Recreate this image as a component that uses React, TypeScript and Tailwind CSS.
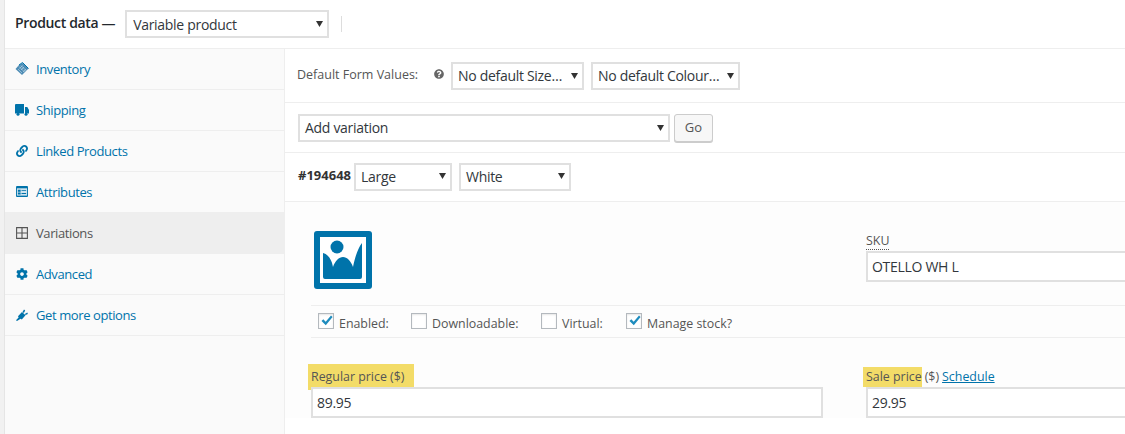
import { FaLink, FaCog, FaQuestionCircle } from 'react-icons/fa';
import type { ReactNode } from 'react';

function Select({ label, className }: { label: string; className: string }) {
    return (
        <div className={`flex h-[28px] items-center justify-between border-2 border-[#e0e0e0] bg-white pl-[5px] pr-[4px] text-[14px] tracking-[-0.3px] text-[#32373c] ${className}`}>
            <span className="whitespace-nowrap">{label}</span>
            <svg width="7" height="6" viewBox="0 0 7 6" className="shrink-0">
                <path d="M0 0h7L3.5 6z" fill="#333" />
            </svg>
        </div>
    );
}

function Check({ checked }: { checked?: boolean }) {
    return (
        <span className="relative block size-[16px] shrink-0 border border-[#b4b9be] bg-white shadow-[inset_0_1px_2px_rgba(0,0,0,0.1)]">
            {checked && (
                <svg width="16" height="14" viewBox="0 0 16 14" className="absolute left-0 top-0">
                    <path d="M2.5 7l1.8-1.8 2.4 2.6L12 1.5l1.6 1.4-6.8 8.4z" fill="#1e8cbe" />
                </svg>
            )}
        </span>
    );
}

function CheckField({ label, checked, className }: { label: string; checked?: boolean; className: string }) {
    return (
        <div className={`flex items-center gap-[5px] ${className}`}>
            <Check checked={checked} />
            <span className="mt-[6px] whitespace-nowrap text-[12.4px] text-[#555]">{label}</span>
        </div>
    );
}

function NavRow({ icon, label, active }: { icon: ReactNode; label: string; active?: boolean }) {
    return (
        <div className={`flex h-[41px] items-center border-b border-[#eee] pl-[10px] pt-[2px] text-[13px] tracking-[-0.4px] ${active ? 'bg-[#eee] text-[#555]' : 'text-[#0073aa]'}`}>
            <span className="mb-[3px] flex w-[21px] justify-start">{icon}</span>
            <span>{label}</span>
        </div>
    );
}

const navItems: { icon: ReactNode; label: string; active?: boolean }[] = [
    {
        label: 'Inventory',
        icon: (
            <svg width="14" height="14" viewBox="0 0 14 14">
                <path d="M7.5 1L13.5 6.5 7 13 .5 7l3.5-4z" fill="#4d8cb5" />
                <path d="M4 4.5l5.5 5.5M6 3.5l5.5 5.5M3 7l4 4M6 8l3-3M4.5 6.5l3-3M8 10l3-3" stroke="#c5dbe8" strokeWidth="0.6" />
                <path d="M4 3L7.5 .5 13.5 6.5" stroke="#0073aa" strokeWidth="1" fill="none" />
            </svg>
        ),
    },
    {
        label: 'Shipping',
        icon: (
            <svg width="14" height="12" viewBox="0 0 14 12">
                <path d="M0 1a1 1 0 011-1h8v9.5H0zM10 3h2.3L14 6v3.5h-4z" fill="#0073aa" />
                <circle cx="3" cy="10.3" r="1.5" fill="#0073aa" />
                <circle cx="11" cy="10.3" r="1.5" fill="#0073aa" />
            </svg>
        ),
    },
    { label: 'Linked Products', icon: <FaLink size={12} className="ml-[1px]" /> },
    {
        label: 'Attributes',
        icon: (
            <svg width="12" height="11" viewBox="0 0 13 12" className="ml-[1px]">
                <path d="M0 1a1 1 0 011-1h11a1 1 0 011 1v10a1 1 0 01-1 1H1a1 1 0 01-1-1z" fill="#0073aa" />
                <path d="M1 2.5h11v8H1z" fill="#cfe3ee" />
                <path d="M2 4h3v2.2H2zM2 7.2h3v2H2zM6 4.5h5v1H6zM6 7.7h5v1H6z" fill="#0073aa" />
            </svg>
        ),
    },
    {
        label: 'Variations',
        active: true,
        icon: (
            <svg width="12" height="12" viewBox="0 0 12 12" className="ml-[1px]">
                <path d="M.6.6h10.8v10.8H.6zM6 .6v10.8M.6 6h10.8" stroke="#555" strokeWidth="1.1" fill="none" />
            </svg>
        ),
    },
    { label: 'Advanced', icon: <FaCog size={12} className="ml-[1px]" /> },
    {
        label: 'Get more options',
        icon: (
            <svg width="12" height="12" viewBox="0 0 12 12" className="ml-[1px]">
                <path d="M0 11.2l2.6-2.8-.6-1.2L6 3 9.5 6.3l-3.7 4.2-1.2-.8L1 12z" fill="#0073aa" />
                <path d="M6.5 3L8 .5 9.2 1.5 7.9 4zM8.8 5L11.3 3.6 11.9 5 9.6 6z" fill="#0073aa" />
            </svg>
        ),
    },
];

function PlaceholderImage() {
    return (
        <div className="size-[58px] rounded-[3px] bg-[#0073aa] p-[6px]">
            <div className="size-full bg-white p-[3px]">
                <svg viewBox="0 0 40 40" className="size-full">
                    <circle cx="14" cy="7" r="6.5" fill="#0073aa" />
                    <path d="M0 13C5 14 9 20 10 27 12 21 16 17 20 17 24 17 28 21 30 27 32 17 35 8 39 3V37a2 2 0 01-2 2H2a2 2 0 01-2-2z" fill="#0073aa" />
                </svg>
            </div>
        </div>
    );
}

function TextInput({ value, className }: { value: string; className: string }) {
    return (
        <div className={`flex h-[31px] items-center border-2 border-[#e0e0e0] bg-white pl-[4px] text-[14px] tracking-[-0.3px] text-[#32373c] ${className}`}>
            {value}
        </div>
    );
}

export default function App() {
    return (
        <div className="flex h-[434px] w-[1125px] overflow-hidden bg-white font-['Open_Sans',sans-serif]">
            <div className="w-[5px] shrink-0 border-r border-[#e5e5e5] bg-[#f1f1f1]" />
            <div className="flex min-w-0 flex-1 flex-col">
                <div className="flex h-[49px] shrink-0 items-center border-b border-[#eee] pl-[10px]">
                    <span className="mb-[3px] whitespace-nowrap text-[14px] font-semibold tracking-[-0.35px] text-[#23282d]">Product data —</span>
                    <Select label="Variable product" className="ml-[10px] w-[204px] pl-[6px]" />
                    <div className="ml-[12px] h-[16px] w-px bg-[#ddd]" />
                </div>
                <div className="flex min-h-0 flex-1">
                    <div className="w-[280px] shrink-0 border-r border-[#eee] bg-[#fafafa]">
                        {navItems.map(item => (
                            <NavRow key={item.label} {...item} />
                        ))}
                    </div>
                    <div className="min-w-0 flex-1">
                        <div className="flex h-[54px] items-center border-b border-[#eee] pl-[12px]">
                            <span className="mb-[1px] w-[122px] whitespace-nowrap text-[12.5px] font-medium text-[#555]">Default Form Values:</span>
                            <FaQuestionCircle size={10} className="mb-[3px] ml-[15px] text-[#666]" />
                            <Select label="No default Size…" className="ml-[7px] w-[133px]" />
                            <Select label="No default Colour…" className="ml-[7px] w-[149px]" />
                        </div>
                        <div className="flex h-[50px] items-center border-b border-[#eee] pl-[13px]">
                            <Select label="Add variation" className="w-[372px]" />
                            <div className="ml-[4px] flex h-[28px] w-[39px] items-center justify-center rounded-[3px] border border-[#ccc] bg-[#f7f7f7] text-[13px] text-[#555] shadow-[0_1px_0_#ccc]">
                                Go
                            </div>
                        </div>
                        <div className="flex h-[49px] items-center border-b border-[#eee] pl-[13px]">
                            <span className="mb-[3px] text-[13px] font-bold text-[#333]">#194648</span>
                            <Select label="Large" className="ml-[3px] w-[98px] pb-[2px]" />
                            <Select label="White" className="ml-[7px] w-[112px] pb-[2px]" />
                        </div>
                        <div className="flex flex-col bg-[#fdfdfd] pl-[26px] pt-[29px]">
                            <div className="flex h-[74px]">
                                <div className="ml-[3px] w-[552px] shrink-0">
                                    <PlaceholderImage />
                                </div>
                                <div className="flex-1 pt-[1px]">
                                    <div className="h-[19px] text-[12.4px] leading-[18px] text-[#555]">
                                        <span className="border-b border-dotted border-[#555]">SKU</span>
                                    </div>
                                    <TextInput value="OTELLO WH L" className="w-[300px]" />
                                </div>
                            </div>
                            <div className="flex h-[33px] items-center border-y border-[#eee] pl-[7px]">
                                <CheckField label="Enabled:" checked className="w-[93px]" />
                                <CheckField label="Downloadable:" className="w-[130px]" />
                                <CheckField label="Virtual:" className="w-[85px]" />
                                <CheckField label="Manage stock?" checked className="w-[140px]" />
                            </div>
                            <div className="mt-[26px] flex">
                                <div className="w-[555px] shrink-0">
                                    <span className="-ml-[3px] block h-[26px] w-[106px] bg-[#f3dc68] pl-[3px] pt-[4px] text-[12.4px] leading-[18px] text-[#555]">
                                        Regular price ($)
                                    </span>
                                    <TextInput value="89.95" className="-mt-[3px] w-[512px]" />
                                </div>
                                <div className="flex-1">
                                    <div className="flex h-[23px] items-end text-[12.4px] leading-[18px] text-[#555]">
                                        <span className="-ml-[3px] bg-[#f3dc68] py-[1px] pl-[3px]">Sale price</span>
                                        <span className="ml-[3px] py-[1px]">($)</span>
                                        <span className="ml-[3px] py-[1px] text-[#0073aa] underline">Schedule</span>
                                    </div>
                                    <TextInput value="29.95" className="w-[300px]" />
                                </div>
                            </div>
                        </div>
                    </div>
                </div>
            </div>
        </div>
    );
}
